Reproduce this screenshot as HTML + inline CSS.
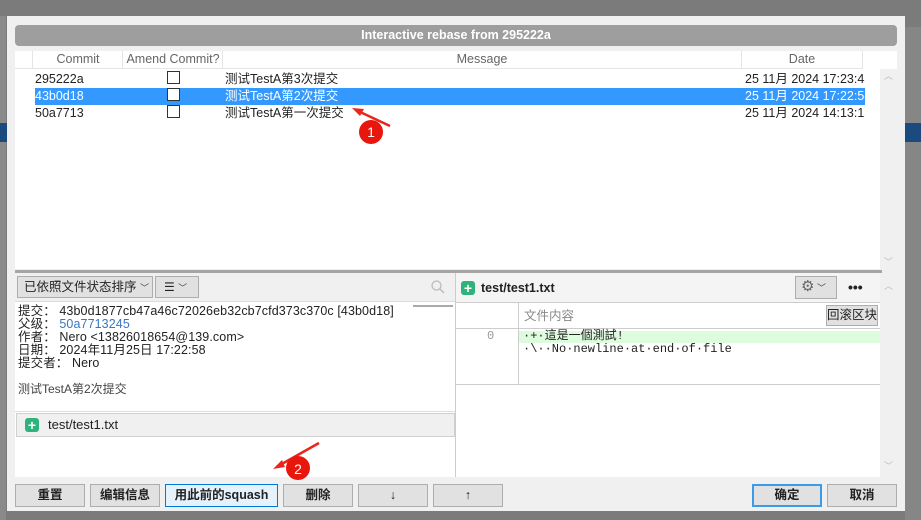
<!DOCTYPE html>
<html><head><meta charset="utf-8"><style>
*{box-sizing:border-box;margin:0;padding:0}
body{width:921px;height:520px;overflow:hidden;background:#7b7b7b;font-family:"Liberation Sans","Noto Sans CJK SC",sans-serif;font-size:12px;color:#222;position:relative}
.a{position:absolute}
.btn{position:absolute;top:484px;height:23px;background:#e1e1e1;border:1px solid #adadad;font-weight:bold;font-size:12.5px;text-align:center;line-height:21px;color:#222}
.mono{font-family:"Liberation Mono","Noto Sans CJK SC",monospace;font-size:12px}
.cb{position:absolute;left:167px;width:13px;height:13px;border:1px solid #333;background:#fff}
</style></head><body>
<div class="a" style="left:0;top:0;width:921px;height:16px;background:#7b7b7b"></div>
<div class="a" style="left:0;top:16px;width:6px;height:504px;background:#8a8a8a"></div>
<div class="a" style="left:0;top:123px;width:7px;height:19px;background:#1a4a7e"></div>
<div class="a" style="left:905px;top:27px;width:16px;height:493px;background:#868686"></div>
<div class="a" style="left:905px;top:123px;width:16px;height:19px;background:#1a4a7e"></div>
<div class="a" style="left:7px;top:16px;width:898px;height:495px;background:#f0f0f0"></div>
<div class="a" style="left:15px;top:25px;width:882px;height:21px;background:#9e9e9e;border-radius:4px;color:#fff;font-weight:bold;font-size:12.5px;text-align:center;line-height:21px">Interactive rebase from 295222a</div>
<!-- list -->
<div class="a" style="left:15px;top:51px;width:882px;height:218px;background:#fff"></div>
<div class="a" style="left:15px;top:51px;width:848px;height:18px;border-bottom:1px solid #e5e5e5;color:#666;font-size:12.5px;line-height:17px">
<div class="a" style="left:17px;width:1px;height:17px;background:#e5e5e5"></div>
<div class="a" style="left:18px;width:90px;text-align:center">Commit</div>
<div class="a" style="left:107px;width:1px;height:17px;background:#e5e5e5"></div>
<div class="a" style="left:108px;width:100px;text-align:center;white-space:nowrap">Amend Commit?</div>
<div class="a" style="left:207px;width:1px;height:17px;background:#e5e5e5"></div>
<div class="a" style="left:208px;width:518px;text-align:center">Message</div>
<div class="a" style="left:726px;width:1px;height:17px;background:#e5e5e5"></div>
<div class="a" style="left:727px;width:120px;text-align:center">Date</div>
<div class="a" style="left:847px;width:1px;height:17px;background:#e5e5e5"></div>
</div>
<div class="a" style="left:880px;top:69px;width:17px;height:200px;background:#f0f0f0;color:#bbb;text-align:center;font-size:9px">︿<div style="position:absolute;top:186px;width:17px">﹀</div></div>
<div class="a" style="left:35px;top:88px;width:830px;height:17px;background:#3399ff"></div>
<div class="a" style="left:35px;top:71px;line-height:17px;font-size:12.5px">295222a</div>
<div class="a" style="left:35px;top:88px;line-height:17px;font-size:12.5px;color:#fff">43b0d18</div>
<div class="a" style="left:35px;top:105px;line-height:17px;font-size:12.5px">50a7713</div>
<div class="cb" style="top:71px"></div><div class="cb" style="top:88px"></div><div class="cb" style="top:105px"></div>
<div class="a" style="left:225px;top:71px;line-height:17px;font-size:12.5px">测试TestA第3次提交</div>
<div class="a" style="left:225px;top:88px;line-height:17px;font-size:12.5px;color:#fff">测试TestA第2次提交</div>
<div class="a" style="left:225px;top:105px;line-height:17px;font-size:12.5px">测试TestA第一次提交</div>
<div class="a" style="left:745px;top:71px;line-height:17px;width:120px;overflow:hidden;white-space:nowrap;font-size:12.5px">25 11月 2024 17:23:43</div>
<div class="a" style="left:745px;top:88px;line-height:17px;width:120px;overflow:hidden;white-space:nowrap;font-size:12.5px;color:#fff">25 11月 2024 17:22:58</div>
<div class="a" style="left:745px;top:105px;line-height:17px;width:120px;overflow:hidden;white-space:nowrap;font-size:12.5px">25 11月 2024 14:13:15</div>
<!-- splitter -->
<div class="a" style="left:15px;top:270px;width:867px;height:3px;background:#a5a5a5"></div>
<!-- left pane -->
<div class="a" style="left:15px;top:273px;width:440px;height:204px;background:#fff"></div>
<div class="a" style="left:15px;top:273px;width:440px;height:29px;background:#f0f0f0;border-bottom:1px solid #ddd"></div>
<div class="a" style="left:17px;top:276px;width:136px;height:22px;background:#e1e1e1;border:1px solid #adadad;line-height:20px;padding-left:6px;font-size:12.5px">已依照文件状态排序 <span style="font-size:9px;color:#444">﹀</span></div>
<div class="a" style="left:155px;top:276px;width:44px;height:22px;background:#e1e1e1;border:1px solid #adadad;line-height:20px;padding-left:8px">☰ <span style="font-size:9px;color:#444">﹀</span></div>
<svg class="a" style="left:431px;top:280px" width="14" height="14"><circle cx="5.5" cy="5.5" r="4.5" fill="none" stroke="#bbb" stroke-width="1.3"/><line x1="9" y1="9" x2="13" y2="13" stroke="#bbb" stroke-width="1.5"/></svg>
<div class="a" style="left:413px;top:305px;width:40px;height:2px;background:#aaa"></div>
<div class="a" style="left:18px;top:305px;font-size:12.5px;line-height:13px;letter-spacing:0.1px">提交： 43b0d1877cb47a46c72026eb32cb7cfd373c370c [43b0d18]<br>父级： <span style="color:#3a75c4">50a7713245</span><br>作者： Nero &lt;13826018654@139.com&gt;<br>日期： 2024年11月25日 17:22:58<br>提交者： Nero</div>
<div class="a" style="left:18px;top:383px;color:#444;line-height:13px">测试TestA第2次提交</div>
<div class="a" style="left:15px;top:411px;width:440px;height:1px;background:#ddd"></div>
<div class="a" style="left:16px;top:413px;width:439px;height:24px;background:#f0f0f0;border:1px solid #d0d0d0"></div>
<div class="a" style="left:25px;top:418px;width:14px;height:14px;background:#2fb37a;border-radius:3px;color:#fff;font-weight:bold;text-align:center;line-height:14px;font-size:14px">+</div>
<div class="a" style="left:48px;top:418px;font-size:13px;line-height:14px">test/test1.txt</div>
<div class="a" style="left:455px;top:273px;width:1px;height:204px;background:#ccc"></div>
<!-- right pane -->
<div class="a" style="left:456px;top:273px;width:424px;height:204px;background:#fff"></div>
<div class="a" style="left:456px;top:273px;width:424px;height:30px;background:#f4f4f4;border-bottom:1px solid #ccc"></div>
<div class="a" style="left:461px;top:281px;width:14px;height:14px;background:#2fb37a;border-radius:3px;color:#fff;font-weight:bold;text-align:center;line-height:14px;font-size:14px">+</div>
<div class="a" style="left:481px;top:281px;font-weight:bold;font-size:12.5px;line-height:14px">test/test1.txt</div>
<div class="a" style="left:795px;top:276px;width:42px;height:23px;background:#e1e1e1;border:1px solid #adadad;line-height:20px;padding-left:5px;color:#666;font-size:15px">⚙<span style="font-size:9px;color:#444"> ﹀</span></div>
<div class="a" style="left:848px;top:278px;font-weight:bold;font-size:14px;line-height:18px">•••</div>
<div class="a" style="left:518px;top:303px;width:1px;height:81px;background:#ccc"></div>
<div class="a" style="left:524px;top:309px;color:#888;font-size:12.5px;line-height:14px">文件内容</div>
<div class="a" style="left:826px;top:305px;width:52px;height:21px;background:#e1e1e1;border:1px solid #adadad;text-align:center;line-height:19px;font-size:12.5px">回滚区块</div>
<div class="a" style="left:456px;top:328px;width:424px;height:1px;background:#ccc"></div>
<div class="a" style="left:519px;top:331px;width:361px;height:12px;background:#ddfbdd"></div>
<div class="a mono" style="left:487px;top:330px;color:#999;line-height:13px">0</div>
<div class="a mono" style="left:523px;top:330px;line-height:13px">·+·這是一個測試!<br>·\··No·newline·at·end·of·file</div>
<div class="a" style="left:456px;top:384px;width:424px;height:1px;background:#ccc"></div>
<div class="a" style="left:880px;top:273px;width:17px;height:204px;background:#f0f0f0;color:#bbb;text-align:center;font-size:9px"><div style="position:absolute;top:6px;width:17px">︿</div><div style="position:absolute;top:186px;width:17px">﹀</div></div>
<!-- buttons -->
<div class="btn" style="left:15px;width:70px">重置</div>
<div class="btn" style="left:90px;width:70px">编辑信息</div>
<div class="btn" style="left:165px;width:113px;background:#e5f1fb;border-color:#0078d7">用此前的squash</div>
<div class="btn" style="left:283px;width:70px">删除</div>
<div class="btn" style="left:358px;width:70px;font-weight:normal">↓</div>
<div class="btn" style="left:433px;width:70px;font-weight:normal">↑</div>
<div class="btn" style="left:752px;width:70px;border:2px solid #3c9ae8;line-height:19px">确定</div>
<div class="btn" style="left:827px;width:70px">取消</div>
<!-- annotations -->
<svg class="a" style="left:0;top:0" width="921" height="520">
<line x1="390" y1="126" x2="358" y2="111" stroke="#e8261b" stroke-width="2.5"/>
<polygon points="352,108 364,109 360,116" fill="#e8261b"/>
<circle cx="371" cy="132" r="12" fill="#e8160c"/>
<text x="371" y="137" fill="#fff" font-size="14" text-anchor="middle" font-family="Liberation Sans">1</text>
<line x1="319" y1="443" x2="280" y2="465" stroke="#e8261b" stroke-width="2.5"/>
<polygon points="273,469 282,460 285,467" fill="#e8261b"/>
<circle cx="298" cy="468" r="12" fill="#e8160c"/>
<text x="298" y="474" fill="#fff" font-size="14" text-anchor="middle" font-family="Liberation Sans">2</text>
</svg>
</body></html>
